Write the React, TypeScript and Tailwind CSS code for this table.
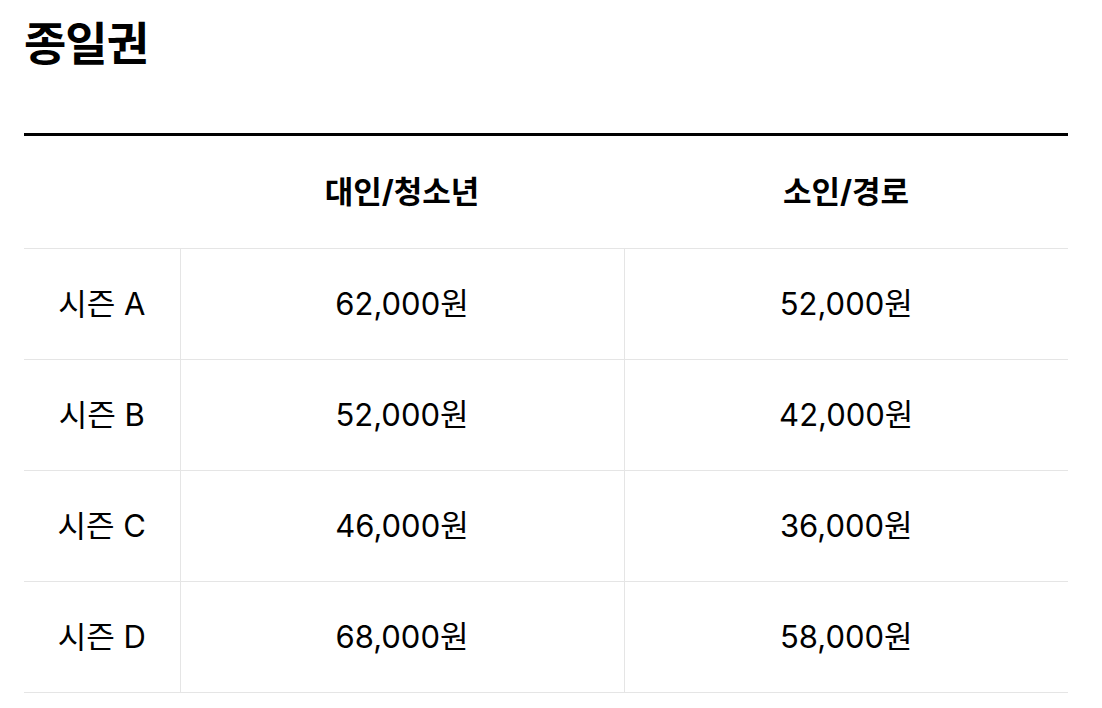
const rows = [
  { season: "시즌 A", adult: "62,000원", child: "52,000원" },
  { season: "시즌 B", adult: "52,000원", child: "42,000원" },
  { season: "시즌 C", adult: "46,000원", child: "36,000원" },
  { season: "시즌 D", adult: "68,000원", child: "58,000원" },
];

export default function App() {
  return (
    <div
      className="min-h-screen bg-white px-6 pt-[11px] text-black"
      style={{ fontFamily: "Inter, 'Noto Sans CJK KR', sans-serif" }}
    >
      <h1 className="text-[46px] font-bold leading-[64px] tracking-[-1px]">종일권</h1>

      <table className="mt-[58px] w-[1044px] border-collapse border-t-[3px] border-black">
        <thead>
          <tr className="h-[114px] border-b border-[#e5e5e5]">
            <th className="w-[156px]" />
            <th className="w-[444px] text-[31px] font-bold">대인/청소년</th>
            <th className="w-[444px] text-[31px] font-bold">소인/경로</th>
          </tr>
        </thead>
        <tbody>
          {rows.map((r) => (
            <tr key={r.season} className="h-[111px] border-b border-[#e5e5e5]">
              <td className="border-r border-[#e5e5e5] text-center text-[31px]">{r.season}</td>
              <td className="border-r border-[#e5e5e5] text-center text-[31px]">{r.adult}</td>
              <td className="text-center text-[31px]">{r.child}</td>
            </tr>
          ))}
        </tbody>
      </table>
    </div>
  );
}
